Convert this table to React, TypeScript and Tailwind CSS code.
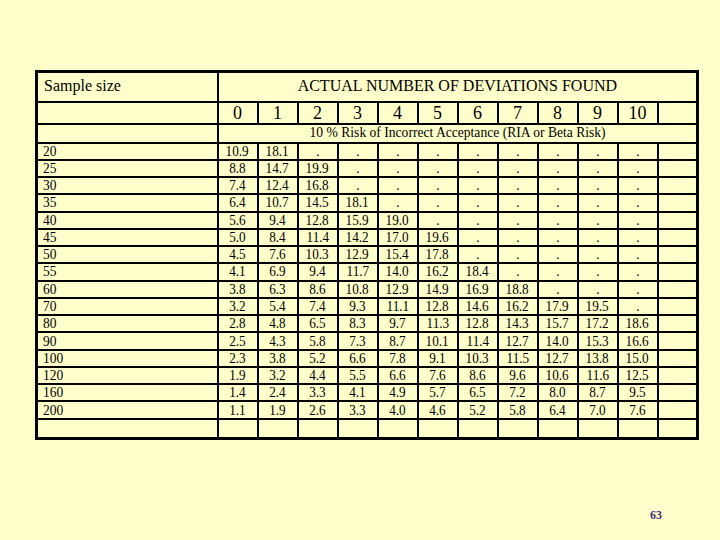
import React from 'react';

const headers = ['0', '1', '2', '3', '4', '5', '6', '7', '8', '9', '10'];

// sample size -> upper deviation rate for 0..10 deviations found
const rows: [string, string[]][] = [
  ['20', ['10.9', '18.1', '.', '.', '.', '.', '.', '.', '.', '.', '.']],
  ['25', ['8.8', '14.7', '19.9', '.', '.', '.', '.', '.', '.', '.', '.']],
  ['30', ['7.4', '12.4', '16.8', '.', '.', '.', '.', '.', '.', '.', '.']],
  ['35', ['6.4', '10.7', '14.5', '18.1', '.', '.', '.', '.', '.', '.', '.']],
  ['40', ['5.6', '9.4', '12.8', '15.9', '19.0', '.', '.', '.', '.', '.', '.']],
  ['45', ['5.0', '8.4', '11.4', '14.2', '17.0', '19.6', '.', '.', '.', '.', '.']],
  ['50', ['4.5', '7.6', '10.3', '12.9', '15.4', '17.8', '.', '.', '.', '.', '.']],
  ['55', ['4.1', '6.9', '9.4', '11.7', '14.0', '16.2', '18.4', '.', '.', '.', '.']],
  ['60', ['3.8', '6.3', '8.6', '10.8', '12.9', '14.9', '16.9', '18.8', '.', '.', '.']],
  ['70', ['3.2', '5.4', '7.4', '9.3', '11.1', '12.8', '14.6', '16.2', '17.9', '19.5', '.']],
  ['80', ['2.8', '4.8', '6.5', '8.3', '9.7', '11.3', '12.8', '14.3', '15.7', '17.2', '18.6']],
  ['90', ['2.5', '4.3', '5.8', '7.3', '8.7', '10.1', '11.4', '12.7', '14.0', '15.3', '16.6']],
  ['100', ['2.3', '3.8', '5.2', '6.6', '7.8', '9.1', '10.3', '11.5', '12.7', '13.8', '15.0']],
  ['120', ['1.9', '3.2', '4.4', '5.5', '6.6', '7.6', '8.6', '9.6', '10.6', '11.6', '12.5']],
  ['160', ['1.4', '2.4', '3.3', '4.1', '4.9', '5.7', '6.5', '7.2', '8.0', '8.7', '9.5']],
  ['200', ['1.1', '1.9', '2.6', '3.3', '4.0', '4.6', '5.2', '5.8', '6.4', '7.0', '7.6']],
];

const cell = 'border-2 border-black p-0 align-middle';

export default function App() {
  return (
    <div className="w-[720px] h-[540px] bg-[#ffffcc] font-['Liberation_Serif',serif] text-black pt-[70px] pl-[35px] overflow-hidden">
      <table className="table-fixed border-collapse border-[3px] border-black w-[661px] leading-none">
        <colgroup>
          <col className="w-[181px]" />
          {Array.from({ length: 12 }).map((_, i) => (
            <col key={i} className="w-[40px]" />
          ))}
        </colgroup>
        <tbody>
          <tr className="h-[30px]">
            <td className={`${cell} pl-[6px] text-[16px] pb-[2px]`}>Sample size</td>
            <td colSpan={12} className={`${cell} text-center text-[16px] pb-[2px]`}>
              ACTUAL NUMBER OF DEVIATIONS FOUND
            </td>
          </tr>
          <tr className="h-[22px]">
            <td className={cell}></td>
            {headers.map(h => (
              <td key={h} className={`${cell} text-center text-[18px]`}>{h}</td>
            ))}
            <td className={cell}></td>
          </tr>
          <tr className="h-[19px]">
            <td className={cell}></td>
            <td colSpan={12} className={`${cell} text-center text-[14px]`}>
              <span className="inline-block scale-x-[0.97]">10 % Risk of Incorrect Acceptance (RIA or Beta Risk)</span>
            </td>
          </tr>
          {rows.map(([size, vals]) => (
            <tr key={size} className="h-[17.27px]">
              <td className={`${cell} pl-[5px] text-[15px]`}>
                <span className="inline-block origin-left scale-x-[0.9]">{size}</span>
              </td>
              {vals.map((v, i) => (
                <td key={i} className={`${cell} text-center text-[15px]`}>
                  <span className="inline-block scale-x-[0.88]">{v}</span>
                </td>
              ))}
              <td className={cell}></td>
            </tr>
          ))}
          <tr className="h-[20px]">
            {Array.from({ length: 13 }).map((_, i) => (
              <td key={i} className={cell}></td>
            ))}
          </tr>
        </tbody>
      </table>
      <div className="flex justify-end pr-[58px] mt-[66px]">
        <span className="text-[12px] font-bold text-[#4b2c7a]">63</span>
      </div>
    </div>
  );
}
